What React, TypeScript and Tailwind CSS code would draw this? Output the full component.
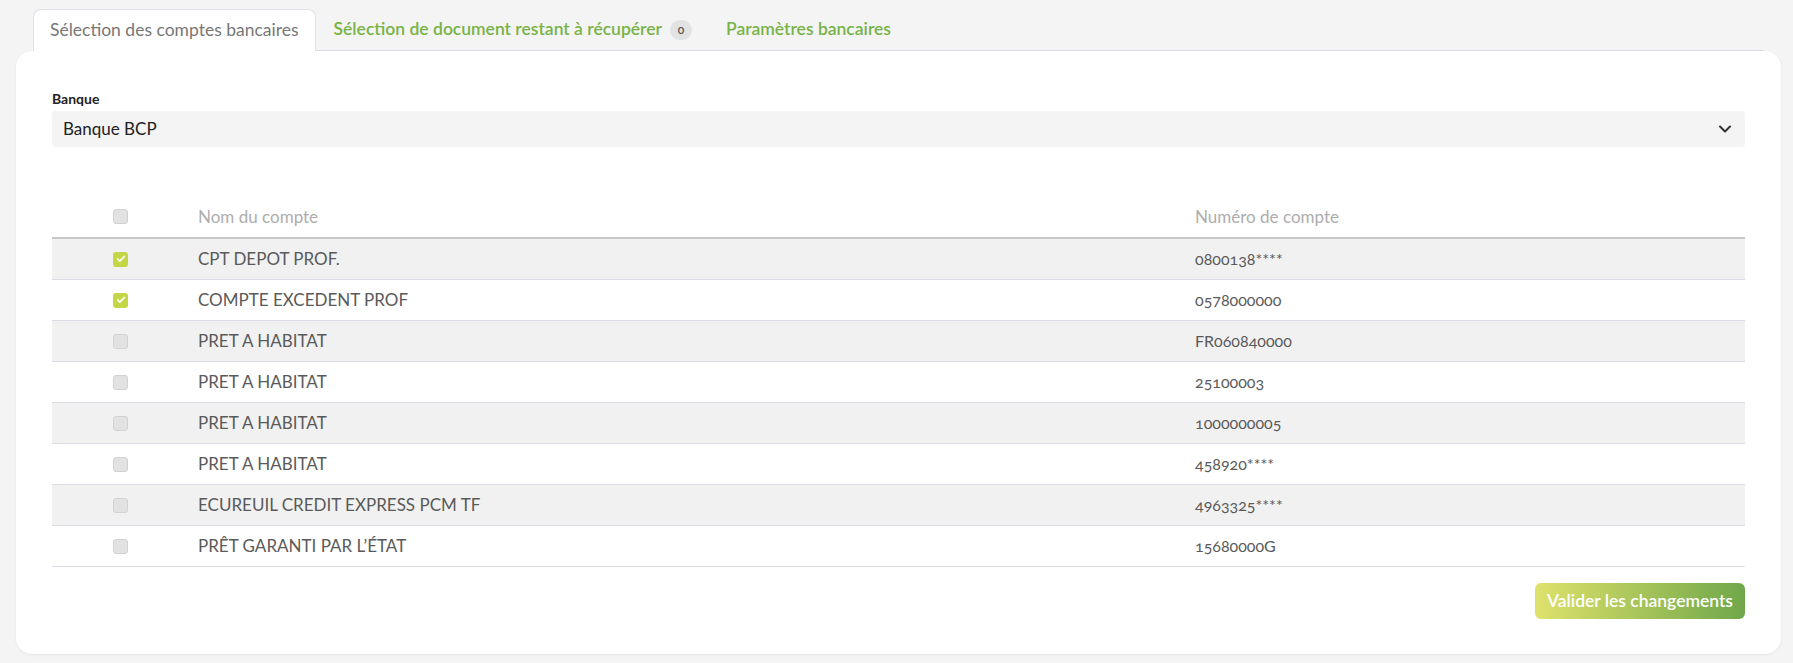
import { Check } from 'lucide-react';

type Account = { checked: boolean; name: string; num: string };

const accounts: Account[] = [
  { checked: true, name: 'CPT DEPOT PROF.', num: '0800138****' },
  { checked: true, name: 'COMPTE EXCEDENT PROF', num: '0578000000' },
  { checked: false, name: 'PRET A HABITAT', num: 'FR060840000' },
  { checked: false, name: 'PRET A HABITAT', num: '25100003' },
  { checked: false, name: 'PRET A HABITAT', num: '1000000005' },
  { checked: false, name: 'PRET A HABITAT', num: '458920****' },
  { checked: false, name: 'ECUREUIL CREDIT EXPRESS PCM TF', num: '4963325****' },
  { checked: false, name: 'PRÊT GARANTI PAR L\u2019ÉTAT', num: '15680000G' },
];

const Box = ({ checked }: { checked: boolean }) =>
  checked ? (
    <span className="flex h-[15px] w-[15px] items-center justify-center rounded-[3px] bg-[#c3d646]">
      <Check size={10} strokeWidth={4} className="text-white" />
    </span>
  ) : (
    <span className="block h-[15px] w-[15px] rounded-[3px] border border-[#d2d2d2] bg-[#e2e2e2]" />
  );

export default function App() {
  return (
    <div className="min-h-screen bg-[#f4f4f4] pt-[9px] pr-3 pb-[9px] pl-4 font-['Lato','Open_Sans',sans-serif] oldstyle-nums">
      {/* tabs */}
      <div className="mx-[17px] flex gap-[2px] border-b border-[#dcdce6]">
        <div className="-mb-px flex h-[42px] items-center rounded-t-lg border border-b-0 border-[#e0e0e8] bg-white px-4 text-[17.5px] text-[#777]">
          Sélection des comptes bancaires
        </div>
        <div className="flex h-[41px] items-center px-4 text-[17.5px] font-semibold text-[#77b347]">
          Sélection de document restant à récupérer
          <span className="ml-2 flex h-5 w-[22px] items-center justify-center rounded-full bg-[#e2e2e2] text-[12px] font-semibold text-[#555]">
            0
          </span>
        </div>
        <div className="flex h-[41px] items-center px-4 text-[17.5px] font-semibold text-[#77b347]">
          Paramètres bancaires
        </div>
      </div>

      {/* card */}
      <div className="rounded-2xl bg-white px-9 pt-10 pb-[35px] shadow-[0_1px_3px_rgba(0,0,0,0.06)]">
        <label className="mb-1 block text-[14px] leading-4 font-bold text-[#222]">Banque</label>
        <div className="flex h-9 items-center justify-between rounded bg-[#f4f4f4] pr-[14px] pl-[11px] text-[17px] text-[#222]">
          <span>Banque BCP</span>
          <svg width="12" height="8" viewBox="0 0 12 8" fill="none">
            <path d="M1 1.5l5 5 5-5" stroke="#333" strokeWidth="2" strokeLinecap="round" strokeLinejoin="round" />
          </svg>
        </div>

        <div className="mt-[49px]">
          <div className="grid h-[43px] grid-cols-[146px_997px_1fr] items-center border-b-2 border-[#c6c6c6] text-[17px] text-[#adadad]">
            <div className="pl-[61px]">
              <Box checked={false} />
            </div>
            <div>Nom du compte</div>
            <div>Numéro de compte</div>
          </div>
          {accounts.map((a, i) => (
            <div
              key={i}
              className={`grid h-[41px] grid-cols-[146px_997px_1fr] items-center border-b border-[#dcdce4] text-[17px] text-[#5a5a5a] ${
                i % 2 === 0 ? 'bg-[#f1f1f1]' : 'bg-white'
              }`}
            >
              <div className="pl-[61px]">
                <Box checked={a.checked} />
              </div>
              <div>{a.name}</div>
              <div className="text-[16px]">{a.num}</div>
            </div>
          ))}
        </div>

        <div className="mt-4 flex justify-end">
          <button className="h-9 rounded-md bg-gradient-to-r from-[#dee26b] to-[#6fa74a] px-3 text-[17.5px] font-semibold text-white">
            Valider les changements
          </button>
        </div>
      </div>
    </div>
  );
}
